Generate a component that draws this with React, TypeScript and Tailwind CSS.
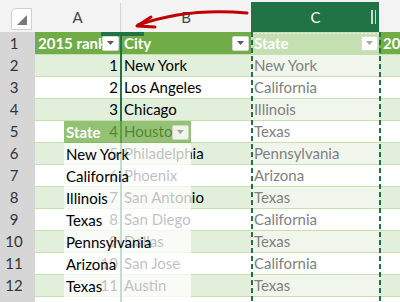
import React from 'react';

const cities: [string, string, string][] = [
  ['1', 'New York', 'New York'],
  ['2', 'Los Angeles', 'California'],
  ['3', 'Chicago', 'Illinois'],
  ['4', 'Houston', 'Texas'],
  ['5', 'Philadelphia', 'Pennsylvania'],
  ['6', 'Phoenix', 'Arizona'],
  ['7', 'San Antonio', 'Texas'],
  ['8', 'San Diego', 'California'],
  ['9', 'Dallas', 'Texas'],
  ['10', 'San Jose', 'California'],
  ['11', 'Austin', 'Texas'],
];

function FilterButton({ faded }: { faded?: boolean }) {
  return (
    <span className="flex h-[15px] w-[17px] shrink-0 items-center justify-center rounded-[2px] border border-[#d9d9d9] bg-white">
      <svg width="7" height="4" viewBox="0 0 7 4">
        <path d="M0 0h7L3.5 4z" fill={faded ? '#a6a6a6' : '#595959'} />
      </svg>
    </span>
  );
}

function HeaderRow() {
  return (
    <div className="flex h-[22px] font-bold text-white">
      <div className="w-[35px] shrink-0 bg-[#d6d6d6] pr-[7px] text-center font-normal leading-[22px] text-[#333]">1</div>
      <div className="flex w-[86px] shrink-0 items-center bg-[#70ad47] pl-[3px] pr-[2px]">
        <span className="min-w-0 flex-1 whitespace-nowrap">2015 rank</span>
        <FilterButton />
      </div>
      <div className="flex w-[130px] shrink-0 items-center bg-[#70ad47] pl-[3px] pr-[2px]">
        <span className="min-w-0 flex-1 whitespace-nowrap">City</span>
        <FilterButton />
      </div>
      <div className="flex w-[128px] shrink-0 items-center bg-[#c4dfb1] pl-[3px] pr-[1px]">
        <span className="min-w-0 flex-1 whitespace-nowrap">State</span>
        <FilterButton faded />
      </div>
      <div className="min-w-0 flex-1 overflow-hidden whitespace-nowrap bg-[#70ad47] pl-[4px] leading-[22px]">2015 estimate</div>
    </div>
  );
}

function BodyRow({ n, rank, city, state }: { n: number; rank?: string; city?: string; state?: string }) {
  const banded = n % 2 === 0;
  return (
    <div className="flex h-[22px] shrink-0">
      <div className="w-[35px] shrink-0 bg-[#d6d6d6] pr-[7px] text-center leading-[22px] text-[#333]">{rank ? n : ''}</div>
      <div className={`flex min-w-0 flex-1 border-t border-[#c6e0b4] ${banded ? 'bg-[#e2efda]' : 'bg-white'}`}>
        <div className="w-[86px] shrink-0 pr-[3px] text-right leading-[21px] text-black">{rank}</div>
        <div className="w-[130px] shrink-0 whitespace-nowrap pl-[3px] leading-[21px] text-black">{city}</div>
        <div className={`w-[128px] shrink-0 whitespace-nowrap pl-[3px] leading-[21px] text-[#7f7f7f] ${banded ? 'bg-[#f0f6ec]' : 'bg-white'}`}>
          {state}
        </div>
        <div className="min-w-0 flex-1" />
      </div>
    </div>
  );
}

export default function App() {
  return (
    <div className="relative flex h-[302px] w-[400px] flex-col overflow-hidden bg-white font-['Lato',sans-serif] text-[15px]">
      {/* column letters */}
      <div className="flex h-8 shrink-0 bg-[#f3f3f3] text-[#444]">
        <div className="w-[35px] shrink-0 pl-[11px] pt-[8px]">
          <div className="flex h-[22px] w-[21px] items-end justify-end rounded-tl-[5px] border border-[#cfcfcf] bg-white p-[4px]">
            <svg width="10" height="10" viewBox="0 0 10 10">
              <path d="M10 0v10H0z" fill="#7a7a7a" />
            </svg>
          </div>
        </div>
        <div className="mt-[3px] flex w-[86px] shrink-0 items-center justify-center border-r border-[#d4d4d4]">A</div>
        <div className="mt-[3px] flex w-[130px] shrink-0 items-center justify-center">B</div>
        <div className="mt-[2px] flex w-[128px] shrink-0 items-center bg-[#217346] text-white">
          <span className="flex-1 pl-[9px] text-center">C</span>
          <span className="mr-[3px] flex h-[14px] gap-[2px]">
            <span className="w-[1.5px] bg-[#c9ddd0]" />
            <span className="w-[1.5px] bg-[#c9ddd0]" />
          </span>
        </div>
        <div className="flex-1" />
      </div>

      <HeaderRow />
      {cities.map((c, i) => (
        <BodyRow key={c[0]} n={i + 2} rank={c[0]} city={c[1]} state={c[2]} />
      ))}
      <BodyRow n={13} />

      {/* insertion marker */}
      <div className="absolute left-[120px] top-[32px] h-[270px] w-[2px] bg-[#217346]" />
      <div className="absolute left-[101px] top-[32px] h-[4px] w-[43px] bg-[#217346]" />

      {/* selection marquee on column C */}
      <div className="absolute left-[251px] top-[32px] h-[270px] w-[2px] bg-[repeating-linear-gradient(to_bottom,#217346_0_5px,transparent_5px_8px)]" />
      <div className="absolute left-[379px] top-[32px] h-[270px] w-[2px] bg-[repeating-linear-gradient(to_bottom,#217346_0_5px,transparent_5px_8px)]" />
      <div className="absolute left-[253px] top-[33px] h-[1px] w-[126px] bg-[repeating-linear-gradient(to_right,#ffffff_0_2px,transparent_2px_4px)]" />

      {/* dragged column ghost */}
      <div className="absolute left-[64px] top-[121px] bottom-0 flex w-[127px] flex-col">
        <div className="flex h-[22px] shrink-0 items-center bg-[#70ad47]/75 pl-[2px] pr-[2px] font-bold text-white">
          <span className="flex-1">State</span>
          <span className="opacity-85">
            <FilterButton faded />
          </span>
        </div>
        <div className="flex-1 bg-white/75">
          {cities.slice(0, 7).map((c) => (
            <div key={c[0]} className="h-[22px] whitespace-nowrap pl-[2px] leading-[22px] text-black">
              {c[2]}
            </div>
          ))}
        </div>
      </div>

      {/* red arrow */}
      <svg className="absolute left-0 top-0" width="400" height="40" viewBox="0 0 400 40">
        <path d="M247 13 C215 10 175 12 138 25" fill="none" stroke="#c00000" strokeWidth="3" strokeLinecap="round" />
        <path d="M151 17 L137 26 L155 27" fill="none" stroke="#c00000" strokeWidth="3" strokeLinecap="round" strokeLinejoin="round" />
      </svg>
    </div>
  );
}
